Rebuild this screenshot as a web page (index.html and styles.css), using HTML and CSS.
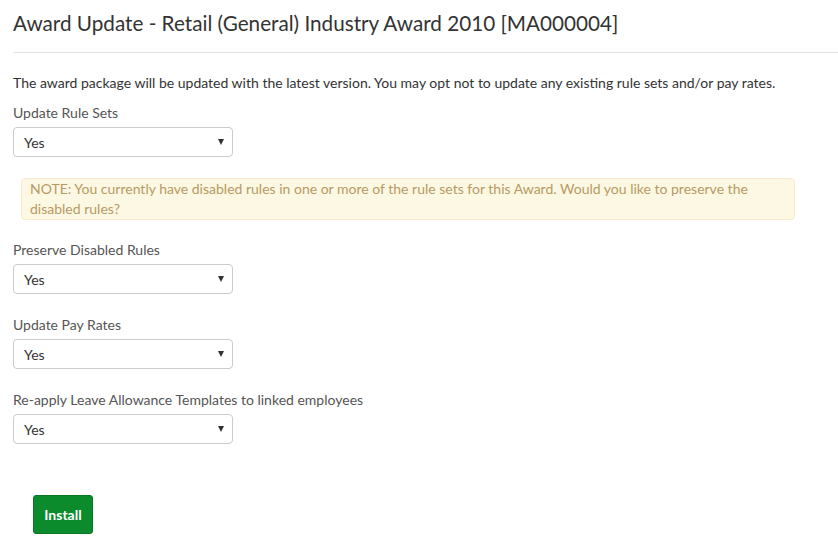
FILE: index.html
```html
<!DOCTYPE html>
<html lang="en">
<head>
  <meta charset="UTF-8" />
  <title>Award Update</title>
  <link rel="stylesheet" href="styles.css">
</head>
<body>
  <div class="page">
    <h1 class="page-title">Award Update - Retail (General) Industry Award 2010 [MA000004]</h1>
    <hr class="divider" />

    <p class="intro">The award package will be updated with the latest version. You may opt not to update any existing rule sets and/or pay rates.</p>

    <div class="form-group">
      <label for="updateRuleSets">Update Rule Sets</label>
      <div class="select-wrap">
        <select id="updateRuleSets">
          <option>Yes</option>
          <option>No</option>
        </select>
      </div>
    </div>

    <!-- shown when the award has disabled rules -->
    <div class="note">NOTE: You currently have disabled rules in one or more of the rule sets for this Award. Would you like to preserve the disabled rules?</div>

    <div class="form-group">
      <label for="preserveDisabled">Preserve Disabled Rules</label>
      <div class="select-wrap">
        <select id="preserveDisabled">
          <option>Yes</option>
          <option>No</option>
        </select>
      </div>
    </div>

    <div class="form-group">
      <label for="updatePayRates">Update Pay Rates</label>
      <div class="select-wrap">
        <select id="updatePayRates">
          <option>Yes</option>
          <option>No</option>
        </select>
      </div>
    </div>

    <div class="form-group">
      <label for="reapplyLeave">Re-apply Leave Allowance Templates to linked employees</label>
      <div class="select-wrap">
        <select id="reapplyLeave">
          <option>Yes</option>
          <option>No</option>
        </select>
      </div>
    </div>

    <div class="actions">
      <button class="btn-install">Install</button>
    </div>
  </div>
</body>
</html>
```

FILE: styles.css
```css
body {
  margin: 0;
  font-family: Lato, "Open Sans", sans-serif;
  font-size: 14px;
  color: #333;
  background-color: #fff;
}

.page {
  padding-left: 13px;
}

/* 제목 */
.page-title {
  margin: 0;
  padding-top: 11px;
  font-size: 20.7px;
  line-height: 24px;
  font-weight: 400;
  color: #333;
}

.divider {
  margin: 17px 0 0 0;
  border: none;
  border-top: 1px solid #e2e2e2;
}

.intro {
  margin: 20px 0 0 0;
  line-height: 20px;
}

.form-group {
  margin-top: 10px;
}

.form-group + .form-group {
  margin-top: 21px;
}

label {
  display: block;
  line-height: 20px;
  color: #555;
  margin-bottom: 4px;
}

/* 드롭다운 */
.select-wrap {
  position: relative;
  width: 220px;
}

.select-wrap::after {
  content: "";
  position: absolute;
  right: 9px;
  top: 12px;
  border-left: 3px solid transparent;
  border-right: 3px solid transparent;
  border-top: 6px solid #333;
  pointer-events: none;
}

select {
  appearance: none;
  -webkit-appearance: none;
  width: 100%;
  height: 30px;
  padding: 0 10px;
  border: 1px solid #ccc;
  border-radius: 4px;
  background-color: #fff;
  font-family: Lato, "Open Sans", sans-serif;
  font-size: 14px;
  color: #333;
  box-sizing: border-box;
}

/* 안내 박스 */
.note {
  margin: 21px 0 0 8px;
  width: 774px;
  box-sizing: border-box;
  padding: 0 8px;
  line-height: 20px;
  background-color: #fcf8e3;
  border: 1px solid #faebcc;
  border-radius: 4px;
  color: #b89a63;
}

.note + .form-group {
  margin-top: 20px;
}

.actions {
  margin-top: 51px;
  padding-left: 20px;
}

.btn-install {
  width: 60px;
  height: 39px;
  background-color: #0b8b2c;
  color: #fff;
  border: 1px solid #087724;
  border-radius: 3px;
  font-family: Lato, "Open Sans", sans-serif;
  font-size: 14px;
  font-weight: 700;
  cursor: pointer;
}
```
